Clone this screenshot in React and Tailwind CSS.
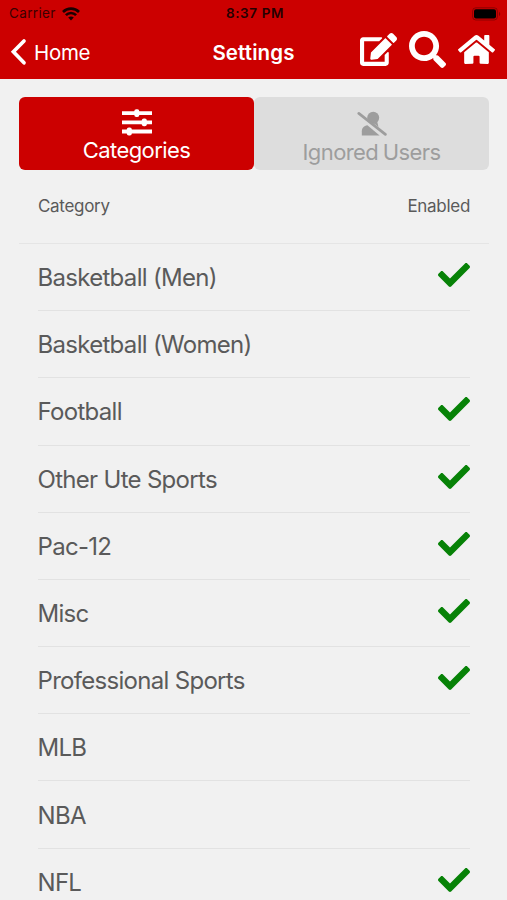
import { FaCheck, FaEdit, FaHome, FaSearch } from 'react-icons/fa';

const categories = [
  { name: 'Basketball (Men)', enabled: true },
  { name: 'Basketball (Women)', enabled: false },
  { name: 'Football', enabled: true },
  { name: 'Other Ute Sports', enabled: true },
  { name: 'Pac-12', enabled: true },
  { name: 'Misc', enabled: true },
  { name: 'Professional Sports', enabled: true },
  { name: 'MLB', enabled: false },
  { name: 'NBA', enabled: false },
  { name: 'NFL', enabled: true },
];

const WifiIcon = () => (
  <svg width="18" height="14" viewBox="0 0 18 14" fill="none" stroke="currentColor" strokeWidth="2.6">
    <path d="M1 5C5.4.5 12.6.5 17 5" />
    <path d="M3.9 8.2c2.9-3 7.3-3 10.2 0" />
    <path d="M6.2 10.6c1.6-1.6 4-1.6 5.6 0L9 13.4Z" fill="currentColor" stroke="none" />
  </svg>
);

const BatteryIcon = () => (
  <svg width="29" height="14" viewBox="0 0 29 14">
    <rect x=".6" y=".8" width="24.8" height="12.2" rx="3.2" fill="none" stroke="#000" strokeOpacity=".3" />
    <rect x="2" y="2.2" width="22" height="9.4" rx="2" fill="#000" />
    <path d="M27 4.8c1.7.8 1.7 3.5 0 4.3Z" fill="#000" fillOpacity=".35" />
  </svg>
);

const SlidersIcon = () => (
  <svg width="32" height="28" viewBox="0 0 32 28" fill="currentColor">
    <path d="M1 3.2h30v3.8H1zM1 12.4h30v3.8H1zM1 21.6h30v3.8H1z" />
    <rect x="13.3" y="1.2" width="5" height="7.8" rx="2" />
    <rect x="20.8" y="10.4" width="5" height="7.8" rx="2" />
    <rect x="5.8" y="19.6" width="5" height="7.8" rx="2" />
  </svg>
);

const UserSlashIcon = () => (
  <svg width="30" height="26" viewBox="0 0 30 26" fill="currentColor">
    <circle cx="16.2" cy="6.8" r="6" />
    <path d="M14 10h6l1.5 6Z" />
    <path d="M4.8 24.6v-4.2c0-3.4 2.2-5.8 5.6-6.2L22.6 24.6Z" />
    <path d="M1.8 2.4 28.4 23.4" fill="none" stroke="currentColor" strokeWidth="2.7" strokeLinecap="round" />
  </svg>
);

const Header = () => (
  <header className="h-[79px] bg-[#cc0000]">
    <div className="grid h-[27px] grid-cols-3 items-center pr-[6px] pl-[9px] text-[13.5px]">
      <div className="flex items-center gap-[6px] text-[#3a0000]">
        <span className="tracking-[0.35px]">Carrier</span>
        <span className="text-[#1a0000]"><WifiIcon /></span>
      </div>
      <span className="text-center font-semibold tracking-[0.6px] whitespace-nowrap text-[#250000]">8:37 PM</span>
      <div className="flex justify-end"><BatteryIcon /></div>
    </div>

    <div className="grid h-[51px] grid-cols-3 items-center pr-3 pl-[10px] text-white">
      <button className="flex items-center gap-[7px] text-left">
        <svg className="mb-[2px]" width="17" height="28" viewBox="0 0 17 28" fill="none" stroke="currentColor" strokeWidth="3.7" strokeLinecap="round" strokeLinejoin="miter">
          <path d="M14 3 3.4 13.7 14 24.8" />
        </svg>
        <span className="pt-px text-[20.5px] tracking-[-0.3px]">Home</span>
      </button>
      <h1 className="pt-px pl-[2px] text-center text-[20.5px] font-semibold tracking-[0.1px]">Settings</h1>
      <div className="flex items-center justify-end gap-[12px] pb-[7px]">
        <FaEdit className="h-[37px] w-[37px]" />
        <FaSearch className="h-[37px] w-[37px]" />
        <FaHome className="h-[37px] w-[37px]" />
      </div>
    </div>
  </header>
);

const Tabs = () => (
  <div className="flex h-[73px] text-[22px] leading-[28px] tracking-[-0.6px]">
    <button className="flex flex-1 flex-col items-center rounded-md bg-[#cc0000] pt-[11px] text-white">
      <SlidersIcon />
      <span>Categories</span>
    </button>
    <button className="flex flex-1 flex-col items-center rounded-md bg-[#dddddd] pt-[14px] text-[#9d9d9d]">
      <UserSlashIcon />
      <span className="pt-px [word-spacing:-1px]">Ignored Users</span>
    </button>
  </div>
);

const CategoryRow = ({ name, enabled }) => (
  <li className="flex h-[67.2px] shrink-0 items-center justify-between border-b border-[#e2e2e2]">
    <span className="pt-[2px] text-[24px] tracking-[-0.7px]">{name}</span>
    {enabled && <FaCheck className="mb-[4px] h-8 w-8 text-[#078207]" />}
  </li>
);

export default function App() {
  return (
    <div className="h-[900px] w-[507px] overflow-hidden bg-[#f1f1f1] font-['Inter',sans-serif] text-[#5a5a5a]">
      <Header />
      <main className="pt-[18.4px] pr-[18px] pl-[19px]">
        <Tabs />
        <div className="flex h-[73.6px] justify-between border-b border-[#e5e5e5] px-[19px] pt-[24px] text-[17px] leading-6 tracking-[-0.3px]">
          <span>Category</span>
          <span>Enabled</span>
        </div>
        <ul className="pr-[19px] pl-[18.5px]">
          {categories.map((c) => (
            <CategoryRow key={c.name} name={c.name} enabled={c.enabled} />
          ))}
        </ul>
      </main>
    </div>
  );
}
